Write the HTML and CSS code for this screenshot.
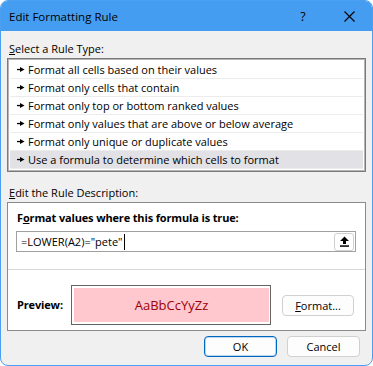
FILE: index.html
```html
<!DOCTYPE html>
<html>

<head>
    <title>Edit Formatting Rule</title>
    <link rel="stylesheet" href="styles.css">
</head>

<body>
    <div class="window">
        <div class="titlebar">
            <span class="title">Edit Formatting Rule</span>
            <span class="caption-btn help">?</span>
            <span class="caption-btn close">
                <svg width="11" height="11" viewBox="0 0 11 11"><path d="M0.5 0.5L10.5 10.5M10.5 0.5L0.5 10.5" stroke="#000" stroke-width="1.1" fill="none"/></svg>
            </span>
        </div>

        <div class="content">
            <div class="label"><u>S</u>elect a Rule Type:</div>
            <ul class="rule-list">
                <li><svg class="bullet" width="8" height="7" viewBox="0 0 8 7"><rect x="0" y="2.9" width="4" height="1.3"/><polygon points="3,1 7.5,3.5 3,6"/></svg>Format all cells based on their values</li>
                <li><svg class="bullet" width="8" height="7" viewBox="0 0 8 7"><rect x="0" y="2.9" width="4" height="1.3"/><polygon points="3,1 7.5,3.5 3,6"/></svg>Format only cells that contain</li>
                <li><svg class="bullet" width="8" height="7" viewBox="0 0 8 7"><rect x="0" y="2.9" width="4" height="1.3"/><polygon points="3,1 7.5,3.5 3,6"/></svg>Format only top or bottom ranked values</li>
                <li><svg class="bullet" width="8" height="7" viewBox="0 0 8 7"><rect x="0" y="2.9" width="4" height="1.3"/><polygon points="3,1 7.5,3.5 3,6"/></svg>Format only values that are above or below average</li>
                <li><svg class="bullet" width="8" height="7" viewBox="0 0 8 7"><rect x="0" y="2.9" width="4" height="1.3"/><polygon points="3,1 7.5,3.5 3,6"/></svg>Format only unique or duplicate values</li>
                <li class="selected"><svg class="bullet" width="8" height="7" viewBox="0 0 8 7"><rect x="0" y="2.9" width="4" height="1.3"/><polygon points="3,1 7.5,3.5 3,6"/></svg>Use a formula to determine which cells to format</li>
            </ul>

            <div class="label desc-label"><u>E</u>dit the Rule Description:</div>
            <div class="group">
                <div class="formula-section">
                    <div class="bold-label">F<u>o</u>rmat values where this formula is true:</div>
                    <div class="formula-input">
                        <span class="formula-text">=LOWER(A2)="pete"</span><span class="caret"></span>
                        <span class="collapse-btn">
                            <svg width="9" height="11" viewBox="0 0 9 11"><polygon points="4.5,0.5 9,5 6,5 6,8 3,8 3,5 0,5"/><rect x="0" y="9.3" width="9" height="1.5"/></svg>
                        </span>
                    </div>
                </div>
                <div class="divider"></div>
                <div class="preview-section">
                    <div class="bold-label preview-label">Preview:</div>
                    <div class="preview-box">
                        <div class="preview-sample">AaBbCcYyZz</div>
                    </div>
                    <span class="btn format-btn"><u>F</u>ormat...</span>
                </div>
            </div>

            <div class="buttons">
                <span class="btn default">OK</span>
                <span class="btn">Cancel</span>
            </div>
        </div>
    </div>
</body>

</html>
```

FILE: styles.css
```css
body {
    margin: 0;
    background: #fff;
    font-family: "Open Sans", "Noto Sans", sans-serif;
    font-size: 11px;
    color: #000;
}

.window {
    box-sizing: border-box;
    width: 373px;
    height: 366px;
    border: 1px solid #4a9ff0;
    border-radius: 8px;
    overflow: hidden;
    background: #f0f0f0;
}

/* title bar */
.titlebar {
    display: flex;
    align-items: center;
    height: 30px;
    background: #459df1;
}

.title {
    flex: 1;
    padding-left: 8px;
    font-size: 11.5px;
}

.caption-btn {
    display: flex;
    align-items: center;
    justify-content: center;
    width: 46px;
    height: 30px;
}

.help {
    font-size: 12.5px;
}

/* body */
.content {
    padding: 0 6px;
}

.label {
    height: 16px;
    line-height: 16px;
    margin-top: 10px;
    padding-left: 2px;
}

.rule-list {
    list-style: none;
    margin: 1px 0 0;
    padding: 2px 2px 2px;
    border: 1px solid #7a7a7a;
    box-shadow: inset 0 0 0 1px #b4b4b4;
    background: #fff;
}

.rule-list li {
    display: flex;
    align-items: center;
    height: 17px;
    padding-left: 7px;
    border-bottom: 1px solid #ececec;
}

.rule-list li.selected {
    background: #e1e1e6;
}

.bullet {
    margin-right: 3px;
    fill: #000;
}

.desc-label {
    margin-top: 13px;
}

.group {
    margin-top: 1px;
    border: 1px solid #8a8a8a;
    background: #fff;
}

.formula-section {
    padding: 7px 9px 0 8px;
}

.bold-label {
    height: 16px;
    line-height: 16px;
    font-weight: bold;
    padding-left: 1px;
    letter-spacing: -0.15px;
}

.formula-input {
    box-sizing: border-box;
    display: flex;
    align-items: center;
    height: 21px;
    margin-top: 5px;
    padding: 1px 1px 1px 4px;
    border: 1px solid #a0a0a0;
}

.caret {
    width: 1px;
    height: 16px;
    margin-left: 2px;
    background: #000;
}

.collapse-btn {
    box-sizing: border-box;
    display: flex;
    align-items: center;
    justify-content: center;
    width: 20px;
    height: 18px;
    margin-left: auto;
    border: 1px solid #cfcfcf;
    border-radius: 3px;
    background: #fff;
}

.divider {
    height: 1px;
    margin-top: 17px;
    background: #d9d9d9;
}

.preview-section {
    display: flex;
    align-items: center;
    padding: 15px 9px 5px 8px;
}

.preview-label {
    width: 54px;
}

.preview-box {
    box-sizing: border-box;
    width: 200px;
    height: 40px;
    padding: 2px 1px 2px 2px;
    border: 1px solid #646464;
    background: #fff;
}

.preview-sample {
    display: flex;
    align-items: center;
    justify-content: center;
    height: 100%;
    background: #ffc7ce;
    color: #9c0006;
    font-size: 13px;
}

.btn {
    box-sizing: border-box;
    display: flex;
    align-items: center;
    justify-content: center;
    width: 73px;
    height: 21px;
    border: 1px solid #d0d0d0;
    border-radius: 4px;
    background: #fdfdfd;
}

.format-btn {
    width: 72px;
    margin-left: 11px;
}

.buttons {
    display: flex;
    justify-content: flex-end;
    gap: 10px;
    margin-top: 5px;
    padding-right: 6px;
}

.btn.default {
    border-color: #0067c0;
    box-shadow: inset 0 0 0 1px rgba(0, 103, 192, 0.25);
}
```
